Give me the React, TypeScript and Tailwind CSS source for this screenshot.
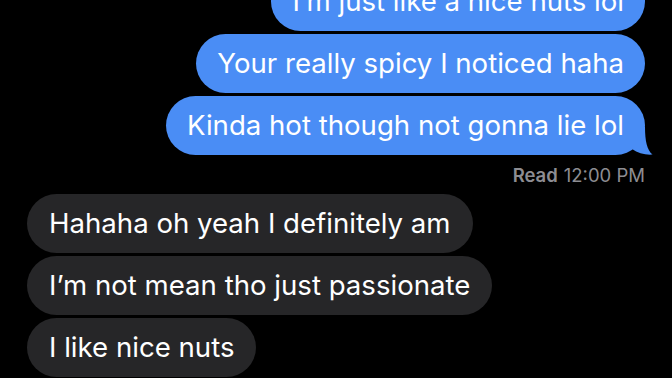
const sent = [
  "I’m just like a nice nuts lol",
  "Your really spicy I noticed haha",
  "Kinda hot though not gonna lie lol",
];

const received = [
  "Hahaha oh yeah I definitely am",
  "I’m not mean tho just passionate",
  "I like nice nuts",
];

function Tail() {
  return (
    <svg
      className="absolute right-[-9px] bottom-0"
      width="26"
      height="28"
      viewBox="0 0 26 28"
    >
      <path d="M17 0 C17 14 19 23 24.5 27.6 C17 28.2 10 26 4 22 L4 0 Z" fill="#4a8df5" />
    </svg>
  );
}

export default function App() {
  return (
    <div className="h-[378px] w-[672px] overflow-hidden bg-black font-['Inter',sans-serif] antialiased">
      <div className="-mt-[28px] flex flex-col px-[27px]">
        {/* sent */}
        <div className="flex flex-col items-end gap-[3px]">
          {sent.map((msg, i) => (
            <div
              key={i}
              className="relative flex h-[59px] items-center rounded-full bg-[#4a8df5] px-[21px] text-[27.6px] leading-none whitespace-nowrap text-white"
            >
              {msg}
              {i === sent.length - 1 && <Tail />}
            </div>
          ))}
        </div>

        {/* read receipt */}
        <div className="flex h-[39px] items-center justify-end pt-[3px] text-[18.5px] text-[#8d8d92]">
          <span className="font-semibold">Read</span>
          <span className="ml-[6px]">12:00 PM</span>
        </div>

        {/* received */}
        <div className="flex flex-col items-start gap-[3px]">
          {received.map((msg, i) => (
            <div
              key={i}
              className="flex h-[59px] items-center rounded-full bg-[#262628] px-[22px] text-[27.6px] leading-none whitespace-nowrap text-white"
            >
              {msg}
            </div>
          ))}
        </div>
      </div>
    </div>
  );
}
